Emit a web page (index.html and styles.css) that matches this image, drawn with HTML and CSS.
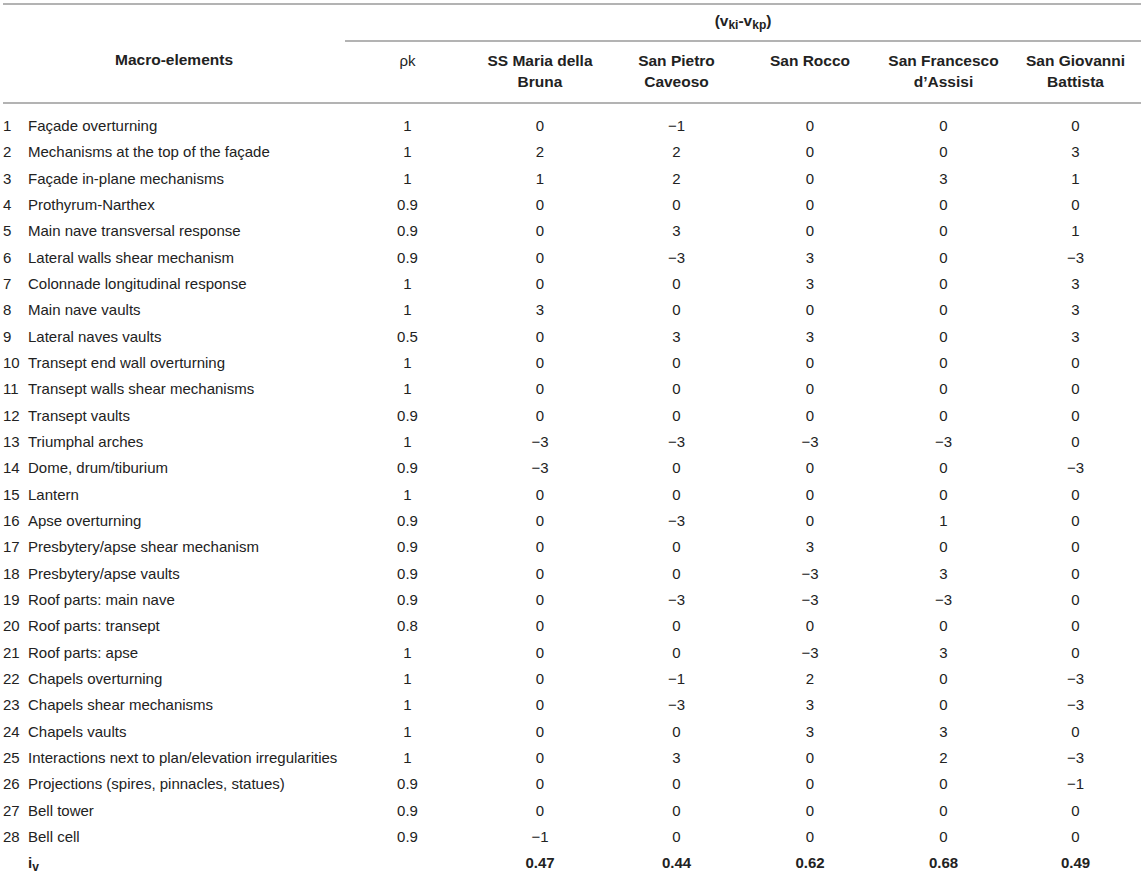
FILE: index.html
```html
<!DOCTYPE html>
<html>
  <head>
    <meta charset="utf-8">
    <title>Macro-elements vulnerability</title>
    <link rel="stylesheet" href="styles.css">
  </head>
  <body>
    <table class="data">
      <colgroup>
        <col class="col-name">
        <col class="col-rho">
        <col class="col-a">
        <col class="col-b">
        <col class="col-c">
        <col class="col-d">
        <col class="col-e">
      </colgroup>
      <thead>
        <tr class="head-top">
          <th></th>
          <th class="group" colspan="6">(v<sub>ki</sub>-v<sub>kp</sub>)</th>
        </tr>
        <tr class="head-main">
          <th>Macro-elements</th>
          <th class="light">ρk</th>
          <th>SS Maria della<br>Bruna</th>
          <th>San Pietro<br>Caveoso</th>
          <th>San Rocco</th>
          <th>San Francesco<br>d’Assisi</th>
          <th>San Giovanni<br>Battista</th>
        </tr>
      </thead>
      <tbody>
        <tr><td class="name"><span class="num">1</span>Façade overturning</td><td>1</td><td>0</td><td>−1</td><td>0</td><td>0</td><td>0</td></tr>
        <tr><td class="name"><span class="num">2</span>Mechanisms at the top of the façade</td><td>1</td><td>2</td><td>2</td><td>0</td><td>0</td><td>3</td></tr>
        <tr><td class="name"><span class="num">3</span>Façade in-plane mechanisms</td><td>1</td><td>1</td><td>2</td><td>0</td><td>3</td><td>1</td></tr>
        <tr><td class="name"><span class="num">4</span>Prothyrum-Narthex</td><td>0.9</td><td>0</td><td>0</td><td>0</td><td>0</td><td>0</td></tr>
        <tr><td class="name"><span class="num">5</span>Main nave transversal response</td><td>0.9</td><td>0</td><td>3</td><td>0</td><td>0</td><td>1</td></tr>
        <tr><td class="name"><span class="num">6</span>Lateral walls shear mechanism</td><td>0.9</td><td>0</td><td>−3</td><td>3</td><td>0</td><td>−3</td></tr>
        <tr><td class="name"><span class="num">7</span>Colonnade longitudinal response</td><td>1</td><td>0</td><td>0</td><td>3</td><td>0</td><td>3</td></tr>
        <tr><td class="name"><span class="num">8</span>Main nave vaults</td><td>1</td><td>3</td><td>0</td><td>0</td><td>0</td><td>3</td></tr>
        <tr><td class="name"><span class="num">9</span>Lateral naves vaults</td><td>0.5</td><td>0</td><td>3</td><td>3</td><td>0</td><td>3</td></tr>
        <tr><td class="name"><span class="num">10</span>Transept end wall overturning</td><td>1</td><td>0</td><td>0</td><td>0</td><td>0</td><td>0</td></tr>
        <tr><td class="name"><span class="num">11</span>Transept walls shear mechanisms</td><td>1</td><td>0</td><td>0</td><td>0</td><td>0</td><td>0</td></tr>
        <tr><td class="name"><span class="num">12</span>Transept vaults</td><td>0.9</td><td>0</td><td>0</td><td>0</td><td>0</td><td>0</td></tr>
        <tr><td class="name"><span class="num">13</span>Triumphal arches</td><td>1</td><td>−3</td><td>−3</td><td>−3</td><td>−3</td><td>0</td></tr>
        <tr><td class="name"><span class="num">14</span>Dome, drum/tiburium</td><td>0.9</td><td>−3</td><td>0</td><td>0</td><td>0</td><td>−3</td></tr>
        <tr><td class="name"><span class="num">15</span>Lantern</td><td>1</td><td>0</td><td>0</td><td>0</td><td>0</td><td>0</td></tr>
        <tr><td class="name"><span class="num">16</span>Apse overturning</td><td>0.9</td><td>0</td><td>−3</td><td>0</td><td>1</td><td>0</td></tr>
        <tr><td class="name"><span class="num">17</span>Presbytery/apse shear mechanism</td><td>0.9</td><td>0</td><td>0</td><td>3</td><td>0</td><td>0</td></tr>
        <tr><td class="name"><span class="num">18</span>Presbytery/apse vaults</td><td>0.9</td><td>0</td><td>0</td><td>−3</td><td>3</td><td>0</td></tr>
        <tr><td class="name"><span class="num">19</span>Roof parts: main nave</td><td>0.9</td><td>0</td><td>−3</td><td>−3</td><td>−3</td><td>0</td></tr>
        <tr><td class="name"><span class="num">20</span>Roof parts: transept</td><td>0.8</td><td>0</td><td>0</td><td>0</td><td>0</td><td>0</td></tr>
        <tr><td class="name"><span class="num">21</span>Roof parts: apse</td><td>1</td><td>0</td><td>0</td><td>−3</td><td>3</td><td>0</td></tr>
        <tr><td class="name"><span class="num">22</span>Chapels overturning</td><td>1</td><td>0</td><td>−1</td><td>2</td><td>0</td><td>−3</td></tr>
        <tr><td class="name"><span class="num">23</span>Chapels shear mechanisms</td><td>1</td><td>0</td><td>−3</td><td>3</td><td>0</td><td>−3</td></tr>
        <tr><td class="name"><span class="num">24</span>Chapels vaults</td><td>1</td><td>0</td><td>0</td><td>3</td><td>3</td><td>0</td></tr>
        <tr><td class="name"><span class="num">25</span>Interactions next to plan/elevation irregularities</td><td>1</td><td>0</td><td>3</td><td>0</td><td>2</td><td>−3</td></tr>
        <tr><td class="name"><span class="num">26</span>Projections (spires, pinnacles, statues)</td><td>0.9</td><td>0</td><td>0</td><td>0</td><td>0</td><td>−1</td></tr>
        <tr><td class="name"><span class="num">27</span>Bell tower</td><td>0.9</td><td>0</td><td>0</td><td>0</td><td>0</td><td>0</td></tr>
        <tr><td class="name"><span class="num">28</span>Bell cell</td><td>0.9</td><td>−1</td><td>0</td><td>0</td><td>0</td><td>0</td></tr>
        <tr class="total"><td class="name"><span class="num"></span>i<sub>v</sub></td><td></td><td>0.47</td><td>0.44</td><td>0.62</td><td>0.68</td><td>0.49</td></tr>
      </tbody>
    </table>
  </body>
</html>
```

FILE: styles.css
```css
body {
  margin: 0;
  padding: 3px;
  background: #fff;
}

.data {
  border-collapse: collapse;
  table-layout: fixed;
  width: 1138px;
  font-family: "Liberation Sans", Arial, sans-serif;
  font-size: 15px;
  color: #222;
  border-top: 2px solid #b3b3b3;
}

.col-name { width: 342px; }
.col-rho { width: 125px; }
.col-a { width: 140px; }
.col-b { width: 133px; }
.col-c { width: 134px; }
.col-d { width: 133px; }
.col-e { width: 131px; }

th {
  font-size: 15.5px;
  font-weight: bold;
  text-align: center;
  vertical-align: top;
  line-height: 21px;
  padding: 0;
}

th.light {
  font-size: 15px;
  font-weight: normal;
}

sub {
  font-size: 12px;
  line-height: 0;
  vertical-align: -3px;
}

.head-top th {
  padding: 5px 0 9px;
}

.head-top .group {
  border-bottom: 2px solid #b3b3b3;
}

.head-main th {
  padding: 8px 0 10px;
  border-bottom: 2px solid #b3b3b3;
}

td {
  text-align: center;
  line-height: 26.33px;
  padding: 0;
  white-space: nowrap;
}

td.name {
  text-align: left;
}

.num {
  display: inline-block;
  width: 25px;
}

tbody tr:first-child td {
  padding-top: 9px;
}

.total td {
  font-weight: bold;
}
```
